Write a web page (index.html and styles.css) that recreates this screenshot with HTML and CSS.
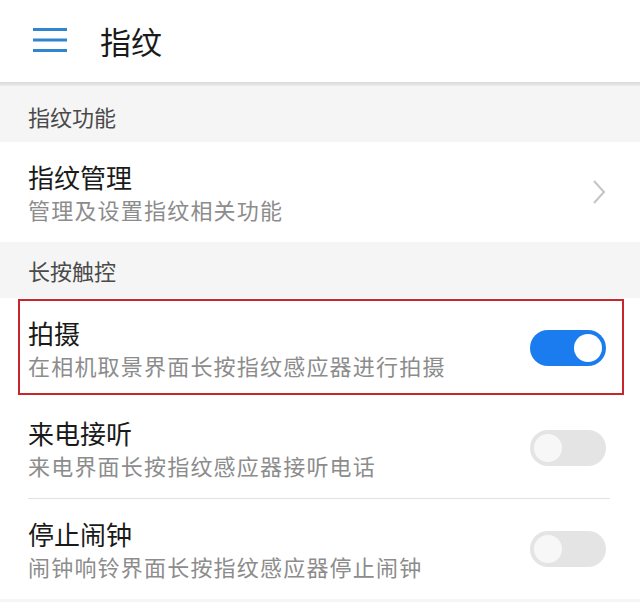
FILE: index.html
```html
<!DOCTYPE html>
<html lang="zh-CN">
<head>
<meta charset="utf-8">
<title>指纹</title>
<link rel="stylesheet" href="styles.css">
</head>
<body>
<div class="screen">
  <header class="appbar">
    <svg class="menu" width="34" height="26" viewBox="0 0 34 26">
      <rect x="0" y="1" width="34" height="3" fill="#2f86cf"/>
      <rect x="0" y="11.5" width="34" height="3" fill="#2f86cf"/>
      <rect x="0" y="22" width="34" height="3" fill="#2f86cf"/>
    </svg>
    <h1 class="title">指纹</h1>
  </header>
  <div class="shadow"></div>
  <div class="section first">指纹功能</div>
  <div class="row">
    <div class="texts">
      <div class="name">指纹管理</div>
      <div class="desc">管理及设置指纹相关功能</div>
    </div>
    <svg class="chev" width="14" height="26" viewBox="0 0 14 26">
      <polyline points="2,2 12,13 2,24" fill="none" stroke="#c4c4c4" stroke-width="2"/>
    </svg>
  </div>
  <div class="section">长按触控</div>
  <div class="row highlighted">
    <div class="texts">
      <div class="name">拍摄</div>
      <div class="desc">在相机取景界面长按指纹感应器进行拍摄</div>
    </div>
    <div class="toggle on"><span class="knob"></span></div>
  </div>
  <div class="row">
    <div class="texts">
      <div class="name">来电接听</div>
      <div class="desc">来电界面长按指纹感应器接听电话</div>
    </div>
    <div class="toggle"><span class="knob"></span></div>
  </div>
  <div class="divider"></div>
  <div class="row">
    <div class="texts">
      <div class="name">停止闹钟</div>
      <div class="desc">闹钟响铃界面长按指纹感应器停止闹钟</div>
    </div>
    <div class="toggle"><span class="knob"></span></div>
  </div>
  <div class="tail"></div>
</div>
</body>
</html>
```

FILE: styles.css
```css
html, body {
  margin: 0;
  padding: 0;
  background: #ffffff;
}
body {
  font-family: "Noto Sans CJK SC", "Noto Sans", sans-serif;
  width: 640px;
  height: 602px;
  overflow: hidden;
}
.screen {
  display: flex;
  flex-direction: column;
}
.appbar {
  height: 82px;
  display: flex;
  align-items: center;
  padding-left: 33px;
  background: #fff;
}
.menu {
  display: block;
  margin-top: -2px;
}
.title {
  margin: 0 0 0 33px;
  font-size: 31px;
  font-weight: 400;
  color: #1a1a1a;
  line-height: 40px;
}
.shadow {
  height: 4px;
  background: linear-gradient(#d9d9d9, #ececec);
}
.section {
  height: 56px;
  background: #f5f5f5;
  color: #4a4a4a;
  font-size: 22px;
  line-height: 56px;
  padding-left: 28px;
  box-sizing: border-box;
}
.section.first {
  padding-top: 4px;
  line-height: 52px;
}
.row {
  position: relative;
  height: 100px;
  display: flex;
  align-items: center;
  justify-content: space-between;
  padding: 0 34px 0 28px;
  background: #fff;
  box-sizing: border-box;
}
.row.highlighted::after {
  content: "";
  position: absolute;
  left: 18px;
  right: 16px;
  top: 1px;
  bottom: 3px;
  border: 2px solid #c8262c;
  pointer-events: none;
}
.texts {
  display: flex;
  flex-direction: column;
  padding-top: 0;
}
.name {
  font-size: 26px;
  line-height: 34px;
  color: #1a1a1a;
}
.desc {
  font-size: 22px;
  line-height: 30px;
  color: #8c8c8c;
  letter-spacing: 1.2px;
}
.chev {
  display: block;
}
.toggle {
  width: 76px;
  height: 36px;
  border-radius: 18px;
  background: #e4e4e4;
  position: relative;
  box-sizing: border-box;
}
.toggle .knob {
  position: absolute;
  top: 4px;
  left: 4px;
  width: 28px;
  height: 28px;
  border-radius: 50%;
  background: #f7f7f7;
}
.toggle.on {
  background: #1a7cee;
}
.toggle.on .knob {
  left: auto;
  right: 4px;
  background: #fff;
}
.divider {
  height: 1px;
  margin: 0 30px 0 28px;
  background: #e2e2e2;
}
.tail {
  height: 10px;
  background: #f5f5f5;
}
```
